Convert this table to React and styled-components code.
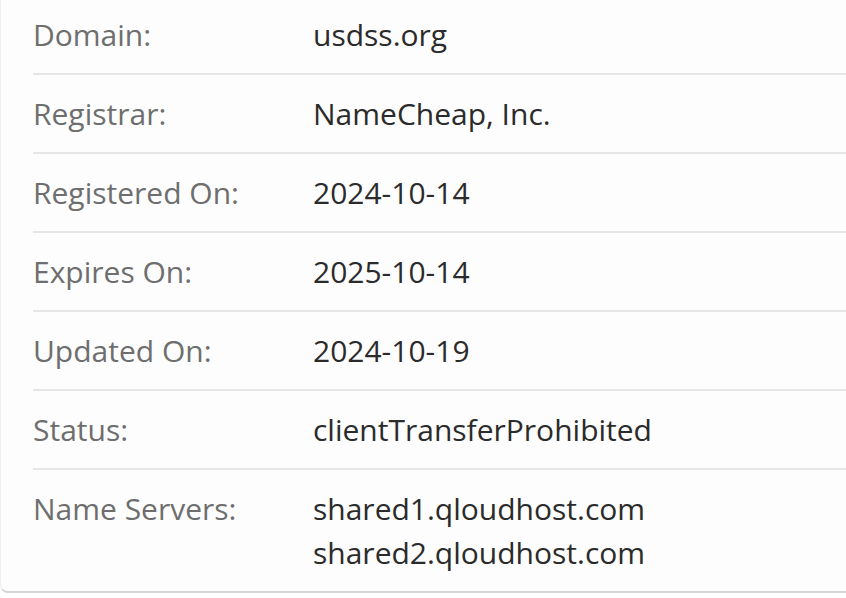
import React from 'react';
import styled, { createGlobalStyle } from 'styled-components';

const GlobalStyle = createGlobalStyle`
  html, body {
    margin: 0;
    padding: 0;
    background: #ffffff;
  }
  body {
    font-family: 'Open Sans', 'DejaVu Sans', sans-serif;
    overflow: hidden;
  }
`;

const Card = styled.div`
  margin-top: -4px;
  width: calc(100% + 20px);
  padding-left: 32px;
  background: #fdfdfd;
  border-left: 1px solid #f0f0f0;
  border-bottom: 2px solid #d6d6d6;
  border-bottom-left-radius: 8px;
  box-sizing: border-box;
`;

const Row = styled.div`
  display: grid;
  grid-template-columns: 280px 1fr;
  padding: 17px 0 16px;
  border-bottom: ${({ $last }) => ($last ? 'none' : '2px solid #e6e6e6')};
  font-size: 30px;
  line-height: 44px;
`;

const Label = styled.div`
  color: #6e6e6e;
`;

const Value = styled.div`
  color: #2b2b2b;
  display: flex;
  flex-direction: column;
`;

const rows = [
  ['Domain:', ['usdss.org']],
  ['Registrar:', ['NameCheap, Inc.']],
  ['Registered On:', ['2024-10-14']],
  ['Expires On:', ['2025-10-14']],
  ['Updated On:', ['2024-10-19']],
  ['Status:', ['clientTransferProhibited']],
  ['Name Servers:', ['shared1.qloudhost.com', 'shared2.qloudhost.com']],
];

export default function App() {
  return (
    <>
      <GlobalStyle />
      <Card>
        {rows.map(([label, values], i) => (
          <Row key={label} $last={i === rows.length - 1}>
            <Label>{label}</Label>
            <Value>
              {values.map((v) => (
                <span key={v}>{v}</span>
              ))}
            </Value>
          </Row>
        ))}
      </Card>
    </>
  );
}
